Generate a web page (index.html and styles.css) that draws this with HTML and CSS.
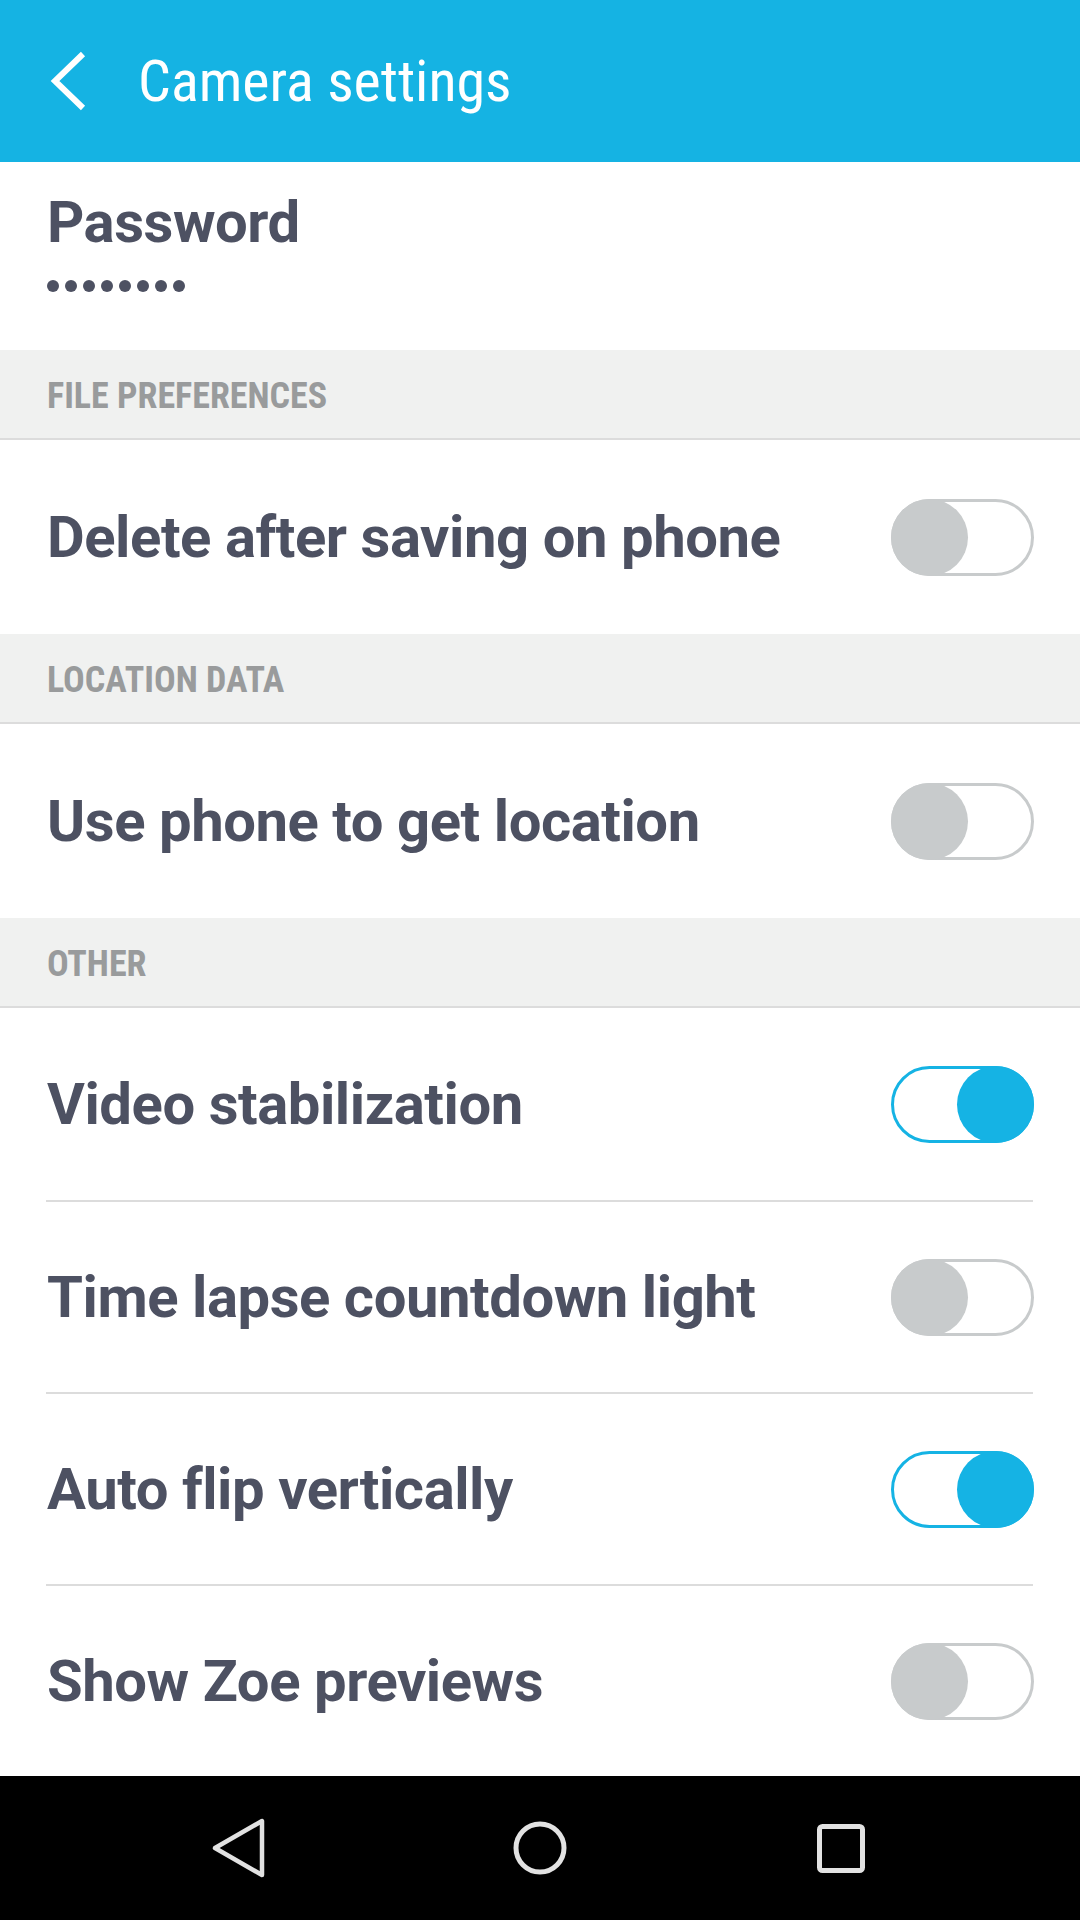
FILE: index.html
```html
<!DOCTYPE html>
<html lang="en">
<head>
    <meta charset="UTF-8">
    <meta name="viewport" content="width=device-width, initial-scale=1.0">
    <title>Camera settings</title>
    <link rel="stylesheet" href="styles.css">
</head>
<body>

<div class="screen">
    <div class="appbar">
        <svg class="back" width="40" height="60" viewBox="0 0 40 60">
            <path d="M35 3 L7 30 L35 57" fill="none" stroke="#fff" stroke-width="6"/>
        </svg>
        <h1 class="title">Camera settings</h1>
    </div>

    <div class="content">
        <div class="password">
            <div class="item-label">Password</div>
            <div class="dots">
                <span></span><span></span><span></span><span></span>
                <span></span><span></span><span></span><span></span>
            </div>
        </div>

        <div class="section">FILE PREFERENCES</div>
        <div class="item">
            <span class="item-label">Delete after saving on phone</span>
            <span class="toggle"><span class="knob"></span></span>
        </div>

        <div class="section">LOCATION DATA</div>
        <div class="item">
            <span class="item-label">Use phone to get location</span>
            <span class="toggle"><span class="knob"></span></span>
        </div>

        <div class="section">OTHER</div>
        <div class="item first">
            <span class="item-label">Video stabilization</span>
            <span class="toggle on"><span class="knob"></span></span>
        </div>
        <div class="divider"></div>
        <div class="item short">
            <span class="item-label">Time lapse countdown light</span>
            <span class="toggle"><span class="knob"></span></span>
        </div>
        <div class="divider"></div>
        <div class="item short">
            <span class="item-label">Auto flip vertically</span>
            <span class="toggle on"><span class="knob"></span></span>
        </div>
        <div class="divider"></div>
        <div class="item short">
            <span class="item-label">Show Zoe previews</span>
            <span class="toggle"><span class="knob"></span></span>
        </div>
    </div>

    <div class="navbar">
        <svg width="60" height="60" viewBox="0 0 60 60">
            <path d="M53 3 L53 57 L6 30 Z" fill="none" stroke="#e2e2e2" stroke-width="4.5" stroke-linejoin="round"/>
        </svg>
        <svg width="60" height="60" viewBox="0 0 60 60">
            <circle cx="30" cy="30" r="24" fill="none" stroke="#e2e2e2" stroke-width="5"/>
        </svg>
        <svg width="60" height="60" viewBox="0 0 60 60">
            <rect x="8.5" y="8.5" width="43" height="44" rx="3" fill="none" stroke="#e2e2e2" stroke-width="5"/>
        </svg>
    </div>
</div>

</body>
</html>
```

FILE: styles.css
```css
body {
    margin: 0;
    font-family: Roboto, "Noto Sans", sans-serif;
    background: #fff;
}
.screen {
    width: 1080px;
    height: 1920px;
    display: flex;
    flex-direction: column;
}
.appbar {
    height: 162px;
    background: #15b3e3;
    display: flex;
    align-items: center;
    padding-left: 48px;
}
.back {
    flex-shrink: 0;
}
.title {
    margin: 0 0 0 50px;
    color: #fff;
    font-size: 58px;
    font-weight: 400;
    font-stretch: 87.5%;
    line-height: 68px;
}
.content {
    flex: 1;
}
.password {
    height: 188px;
    box-sizing: border-box;
    padding: 26px 0 0 47px;
}
.item-label {
    color: #4d5162;
    font-size: 58px;
    font-weight: 700;
    letter-spacing: -0.45px;
    line-height: 68px;
}
.dots {
    display: flex;
    gap: 6px;
    margin-top: 24px;
}
.dots span {
    width: 12px;
    height: 12px;
    border-radius: 50%;
    background: #4d5162;
}
.section {
    height: 90px;
    box-sizing: border-box;
    padding: 4px 0 0 47px;
    display: flex;
    align-items: center;
    background: #f0f1f0;
    border-bottom: 2px solid #dcdcdc;
    color: #999b9c;
    font-size: 36px;
    font-weight: 700;
    font-stretch: 87.5%;
}
.item {
    height: 194px;
    display: flex;
    align-items: center;
    justify-content: space-between;
    padding: 0 46px 0 47px;
}
.item.first {
    height: 192px;
}
.item.short {
    height: 190px;
}
.divider {
    height: 2px;
    margin: 0 47px 0 46px;
    background: #dcdcdc;
}
.toggle {
    width: 143px;
    height: 77px;
    box-sizing: border-box;
    border: 3px solid #c8cbcc;
    border-radius: 39px;
    position: relative;
    flex-shrink: 0;
}
.knob {
    position: absolute;
    top: -3px;
    left: -3px;
    width: 77px;
    height: 77px;
    border-radius: 50%;
    background: #c8cbcc;
}
.toggle.on {
    border-color: #15b3e4;
}
.toggle.on .knob {
    left: auto;
    right: -3px;
    background: #15b3e4;
}
.navbar {
    height: 144px;
    background: #000;
    display: flex;
    justify-content: center;
    align-items: center;
    gap: 241px;
}
```
